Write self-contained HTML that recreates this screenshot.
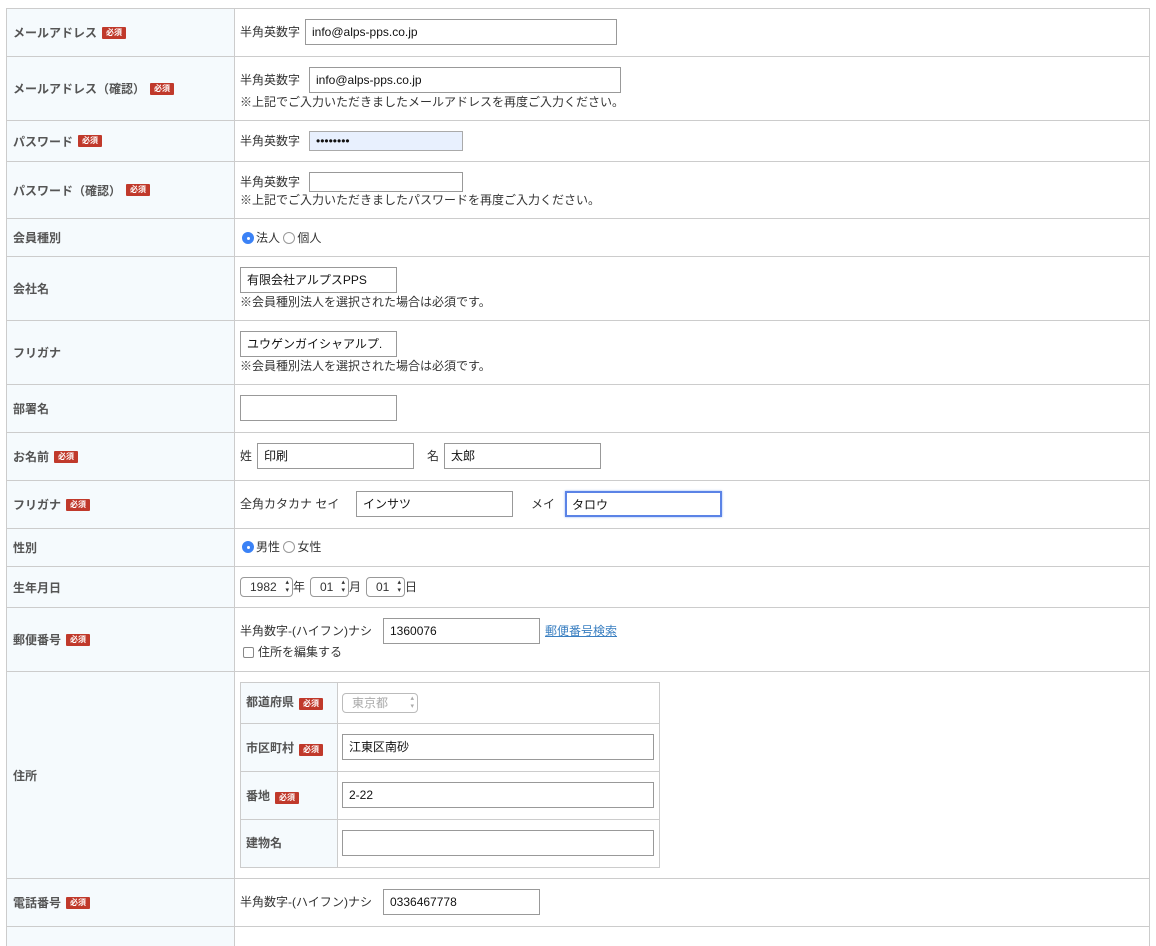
<!DOCTYPE html>
<html><head><meta charset="utf-8"><style>
*{box-sizing:border-box;margin:0;padding:0}
body{width:1156px;height:931px;background:#fff;position:relative;overflow:hidden;font-family:"Liberation Sans","Noto Sans CJK JP",sans-serif;font-size:12px;color:#333}
.a{position:absolute}
.row{position:absolute;left:6px;width:1144px;border:1px solid #ccc;border-bottom:none}
.lab{position:absolute;left:0;top:0;bottom:0;width:228px;background:#f5fafd;border-right:1px solid #ccc;font-weight:bold;color:#555;display:flex;align-items:center;padding-left:6px;font-size:12px}
.b{display:inline-block;background:#c0392b;color:#fff;font-size:8px;line-height:11px;height:12px;padding:0 4px;margin-left:5px;border-radius:1px;font-weight:bold}
.in{position:absolute;border:1px solid #999;background:#fff;height:26px;font-size:12px;color:#111;padding-left:6px;line-height:24px;white-space:nowrap;overflow:hidden}
.t{position:absolute;white-space:nowrap;line-height:14px}
.rad{display:inline-block;width:12px;height:12px;border-radius:50%;border:1px solid #999;vertical-align:-2px;margin-right:2px}
.rad.on{background:#3b82f6;border-color:#3b82f6;position:relative}
.rad.on:after{content:"";position:absolute;left:3.5px;top:3.5px;width:3px;height:3px;border-radius:50%;background:#fff}
.sel{position:absolute;border:1px solid #999;border-radius:4px;height:20px;line-height:18px;padding-left:9px;font-size:12px;background:#fff}
.sel:after{content:"▴\A▾";white-space:pre;position:absolute;right:3px;top:1px;font-size:7px;line-height:8px}
</style></head><body>
<div class="row" style="top:8px;height:48px"><div class="lab">メールアドレス<span class="b">必須</span></div></div>
<div class="row" style="top:56px;height:64px"><div class="lab">メールアドレス（確認）<span class="b">必須</span></div></div>
<div class="row" style="top:120px;height:41px"><div class="lab">パスワード<span class="b">必須</span></div></div>
<div class="row" style="top:161px;height:57px"><div class="lab">パスワード（確認）<span class="b">必須</span></div></div>
<div class="row" style="top:218px;height:38px"><div class="lab">会員種別</div></div>
<div class="row" style="top:256px;height:64px"><div class="lab">会社名</div></div>
<div class="row" style="top:320px;height:64px"><div class="lab">フリガナ</div></div>
<div class="row" style="top:384px;height:48px"><div class="lab">部署名</div></div>
<div class="row" style="top:432px;height:48px"><div class="lab">お名前<span class="b">必須</span></div></div>
<div class="row" style="top:480px;height:48px"><div class="lab">フリガナ<span class="b">必須</span></div></div>
<div class="row" style="top:528px;height:38px"><div class="lab">性別</div></div>
<div class="row" style="top:566px;height:41px"><div class="lab">生年月日</div></div>
<div class="row" style="top:607px;height:64px"><div class="lab">郵便番号<span class="b">必須</span></div></div>
<div class="row" style="top:671px;height:207px"><div class="lab">住所</div></div>
<div class="row" style="top:878px;height:48px"><div class="lab">電話番号<span class="b">必須</span></div></div>
<div class="row" style="top:926px;height:20px"><div class="lab"></div></div>

<div class="t" style="left:240px;top:25px">半角英数字</div>
<div class="in" style="left:305px;top:19px;width:312px">info@alps-pps.co.jp</div>
<div class="t" style="left:240px;top:73px">半角英数字</div>
<div class="in" style="left:309px;top:67px;width:312px">info@alps-pps.co.jp</div>
<div class="t" style="left:240px;top:95px">※上記でご入力いただきましたメールアドレスを再度ご入力ください。</div>
<div class="t" style="left:240px;top:134px">半角英数字</div>
<div class="in" style="left:309px;top:131px;width:154px;height:20px;line-height:18px;background:#e8f0fe;border-color:#aaa">••••••••</div>
<div class="t" style="left:240px;top:175px">半角英数字</div>
<div class="in" style="left:309px;top:172px;width:154px;height:20px"></div>
<div class="t" style="left:240px;top:193px">※上記でご入力いただきましたパスワードを再度ご入力ください。</div>
<div class="t" style="left:242px;top:231px"><span class="rad on"></span>法人 <span class="rad"></span>個人</div>
<div class="in" style="left:240px;top:267px;width:157px">有限会社アルプスPPS</div>
<div class="t" style="left:240px;top:295px">※会員種別法人を選択された場合は必須です。</div>
<div class="in" style="left:240px;top:331px;width:157px">ユウゲンガイシャアルプ.</div>
<div class="t" style="left:240px;top:359px">※会員種別法人を選択された場合は必須です。</div>
<div class="in" style="left:240px;top:395px;width:157px"></div>
<div class="t" style="left:240px;top:449px">姓</div>
<div class="in" style="left:257px;top:443px;width:157px">印刷</div>
<div class="t" style="left:427px;top:449px">名</div>
<div class="in" style="left:444px;top:443px;width:157px">太郎</div>
<div class="t" style="left:240px;top:497px">全角カタカナ セイ</div>
<div class="in" style="left:356px;top:491px;width:157px">インサツ</div>
<div class="t" style="left:531px;top:497px">メイ</div>
<div class="in" style="left:565px;top:491px;width:157px;border:2px solid #5b83e6;box-shadow:0 0 2px #8fb0f5;padding-left:5px">タロウ</div>
<div class="t" style="left:242px;top:540px"><span class="rad on"></span>男性 <span class="rad"></span>女性</div>
<div class="sel" style="left:240px;top:577px;width:53px">1982</div><div class="t" style="left:293px;top:580px">年</div>
<div class="sel" style="left:310px;top:577px;width:39px">01</div><div class="t" style="left:349px;top:580px">月</div>
<div class="sel" style="left:366px;top:577px;width:39px">01</div><div class="t" style="left:405px;top:580px">日</div>
<div class="t" style="left:240px;top:624px">半角数字-(ハイフン)ナシ</div>
<div class="in" style="left:383px;top:618px;width:157px">1360076</div>
<div class="t" style="left:545px;top:624px;color:#3a7fc1;text-decoration:underline">郵便番号検索</div>
<div class="t" style="left:243px;top:645px"><span style="display:inline-block;width:11px;height:11px;border:1px solid #888;border-radius:2px;vertical-align:-2px;margin-right:4px"></span>住所を編集する</div>

<div class="a" style="left:240px;top:682px;width:420px;height:186px;border:1px solid #ccc">
<div class="a" style="left:0;top:0;width:97px;height:184px;background:#f5fafd;border-right:1px solid #ccc"></div>
<div class="a" style="left:0;top:40px;width:418px;border-top:1px solid #ccc"></div>
<div class="a" style="left:0;top:88px;width:418px;border-top:1px solid #ccc"></div>
<div class="a" style="left:0;top:136px;width:418px;border-top:1px solid #ccc"></div>
</div>
<div class="t" style="left:246px;top:695px;font-weight:bold;color:#555">都道府県<span class="b">必須</span></div>
<div class="sel" style="left:342px;top:693px;width:76px;color:#aaa;border-color:#bbb">東京都</div>
<div class="t" style="left:246px;top:741px;font-weight:bold;color:#555">市区町村<span class="b">必須</span></div>
<div class="in" style="left:342px;top:734px;width:312px">江東区南砂</div>
<div class="t" style="left:246px;top:789px;font-weight:bold;color:#555">番地<span class="b">必須</span></div>
<div class="in" style="left:342px;top:782px;width:312px">2-22</div>
<div class="t" style="left:246px;top:836px;font-weight:bold;color:#555">建物名</div>
<div class="in" style="left:342px;top:830px;width:312px"></div>

<div class="t" style="left:240px;top:895px">半角数字-(ハイフン)ナシ</div>
<div class="in" style="left:383px;top:889px;width:157px">0336467778</div>
</body></html>
